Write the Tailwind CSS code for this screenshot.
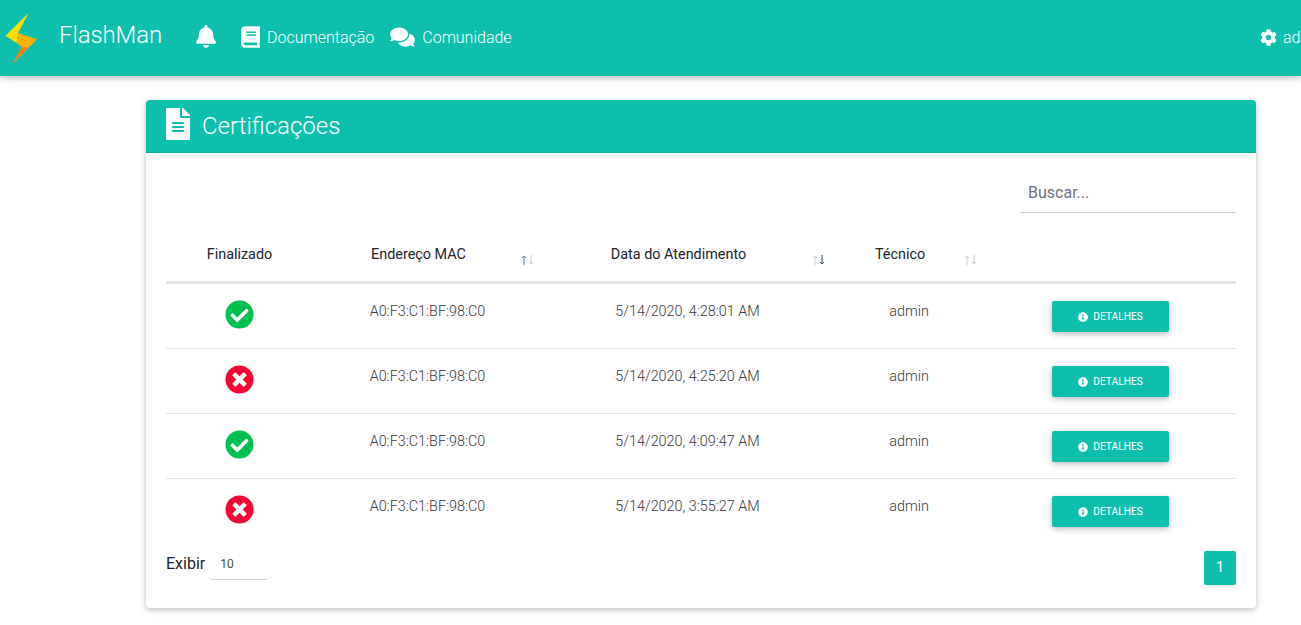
<!DOCTYPE html>
<html lang="pt">
<head>
    <meta charset="UTF-8">
    <meta name="viewport" content="width=device-width, initial-scale=1.0">
    <title>FlashMan - Certificações</title>
    <script src="https://cdn.jsdelivr.net/npm/@tailwindcss/browser@4"></script>
</head>
<body class="bg-white font-['Roboto',sans-serif] text-[#212529] h-[625px] overflow-hidden">
    <!-- Navigation -->
    <nav class="h-[76px] bg-[#0ebfad] text-white flex items-center shadow-[0_2px_5px_0_rgba(0,0,0,0.16),0_2px_10px_0_rgba(0,0,0,0.12)] relative">
        <svg class="w-[37px] h-[50px] ml-[3px] mb-[1px] shrink-0" viewBox="3 13 37 50">
            <polygon points="28.5,13 5.5,35.7 16.7,43 18,33" fill="#ffdd00"/>
            <polygon points="18,33 37,39.3 13.5,63 21.7,46.7 16.7,43" fill="#ffb000"/>
            <polygon points="21.7,46.7 28,47.5 13.5,63" fill="#ff7a0a"/>
        </svg>
        <span class="ml-[19px] text-[24px] font-light leading-none mb-[6px] tracking-[-0.005em]">FlashMan</span>
        <svg class="w-[20px] h-[23px] ml-[34px] mb-[4px] shrink-0" viewBox="0 0 448 512" fill="currentColor"><path d="M224 512c35.32 0 63.97-28.65 63.97-64H160.03c0 35.35 28.65 64 63.97 64zm215.39-149.71c-19.32-20.76-55.47-51.99-55.47-154.29 0-77.7-54.48-139.9-127.94-155.16V32c0-17.67-14.32-32-31.98-32s-31.98 14.33-31.98 32v20.84C118.56 68.1 64.08 130.3 64.08 208c0 102.3-36.15 133.53-55.47 154.29-6 6.45-8.66 14.16-8.61 21.71.11 16.4 12.98 32 32.1 32h383.8c19.12 0 32-15.6 32.1-32 .05-7.55-2.61-15.27-8.61-21.71z"/></svg>
        <svg class="w-[19px] h-[22px] ml-[25px] mb-[2px] shrink-0" viewBox="0 0 448 512" fill="currentColor"><path d="M448 360V24c0-13.3-10.7-24-24-24H96C43 0 0 43 0 96v320c0 53 43 96 96 96h328c13.3 0 24-10.7 24-24v-16c0-7.5-3.5-14.3-8.9-18.7-4.2-15.4-4.2-59.3 0-74.7 5.4-4.3 8.9-11.1 8.9-18.6zM128 134c0-3.3 2.7-6 6-6h212c3.3 0 6 2.7 6 6v20c0 3.3-2.7 6-6 6H134c-3.3 0-6-2.7-6-6v-20zm0 64c0-3.3 2.7-6 6-6h212c3.3 0 6 2.7 6 6v20c0 3.3-2.7 6-6 6H134c-3.3 0-6-2.7-6-6v-20zm253.4 250H96c-17.7 0-32-14.3-32-32 0-17.6 14.4-32 32-32h285.4c-1.9 17.1-1.9 46.9 0 64z"/></svg>
        <span class="ml-[7px] text-[16px] font-light">Documentação</span>
        <svg class="w-[25px] h-[22px] ml-[16px] mb-[2px] shrink-0" viewBox="0 0 576 512" fill="currentColor"><path d="M416 192c0-88.4-93.1-160-208-160S0 103.6 0 192c0 34.3 14.1 65.9 38 92-13.4 30.2-35.5 54.2-35.8 54.5-2.2 2.3-2.8 5.7-1.5 8.7S4.8 352 8 352c36.6 0 66.9-12.3 88.7-25 32.2 15.7 70.3 25 111.3 25 114.9 0 208-71.6 208-160zm122 220c23.9-26 38-57.7 38-92 0-66.9-53.5-124.2-129.3-148.1.9 6.6 1.3 13.3 1.3 20.1 0 105.9-107.7 192-240 192-10.8 0-21.3-.8-31.7-1.9C207.8 439.6 281.8 480 368 480c41 0 79.1-9.2 111.3-25 21.8 12.7 52.1 25 88.7 25 3.2 0 6.1-1.9 7.3-4.8 1.3-2.9.7-6.3-1.5-8.7-.3-.3-22.4-24.2-35.8-54.5z"/></svg>
        <span class="ml-[7px] text-[16px] font-light">Comunidade</span>
        <div class="ml-auto w-[41px] overflow-hidden flex items-center whitespace-nowrap shrink-0">
            <svg class="w-[17px] h-[17px] mb-[2px] shrink-0" viewBox="0 0 512 512" fill="currentColor"><path d="M487.4 315.7l-42.6-24.6c4.3-23.2 4.3-47 0-70.2l42.6-24.6c4.9-2.8 7.1-8.6 5.5-14-11.1-35.6-30-67.8-54.7-94.6-3.8-4.1-10-5.1-14.8-2.3L380.8 110c-17.9-15.4-38.5-27.3-60.8-35.1V25.8c0-5.6-3.9-10.5-9.4-11.7-36.7-8.2-74.3-7.8-109.2 0-5.5 1.2-9.4 6.1-9.4 11.7V75c-22.2 7.9-42.8 19.8-60.8 35.1L88.7 85.5c-4.9-2.8-11-1.9-14.8 2.3-24.7 26.7-43.6 58.9-54.7 94.6-1.7 5.4.6 11.2 5.5 14L67.3 221c-4.3 23.2-4.3 47 0 70.2l-42.6 24.6c-4.9 2.8-7.1 8.6-5.5 14 11.1 35.6 30 67.8 54.7 94.6 3.8 4.1 10 5.1 14.8 2.3l42.6-24.6c17.9 15.4 38.5 27.3 60.8 35.1v49.2c0 5.6 3.9 10.5 9.4 11.7 36.7 8.2 74.3 7.8 109.2 0 5.5-1.2 9.4-6.1 9.4-11.7v-49.2c22.2-7.9 42.8-19.8 60.8-35.1l42.6 24.6c4.9 2.8 11 1.9 14.8-2.3 24.7-26.7 43.6-58.9 54.7-94.6 1.5-5.5-.7-11.3-5.6-14.1zM256 336c-44.1 0-80-35.9-80-80s35.9-80 80-80 80 35.9 80 80-35.9 80-80 80z"/></svg>
            <span class="ml-[6px] text-[16px] font-light">admin</span>
        </div>
    </nav>

    <!-- Card -->
    <section class="mt-[24px] ml-[146px] w-[1110px] h-[508px] bg-white rounded-[4px] overflow-hidden shadow-[0_2px_5px_0_rgba(0,0,0,0.16),0_2px_10px_0_rgba(0,0,0,0.12)]">
        <div class="h-[53px] bg-[#0ebfad] border-b border-[#0da899] text-white flex items-center pl-[20px]">
            <svg class="w-[24px] h-[32px] mb-[5px] shrink-0" viewBox="0 0 384 512" fill="currentColor"><path d="M224 136V0H24C10.7 0 0 10.7 0 24v464c0 13.3 10.7 24 24 24h336c13.3 0 24-10.7 24-24V160H248c-13.2 0-24-10.8-24-24zm64 236c0 6.6-5.4 12-12 12H108c-6.6 0-12-5.4-12-12v-8c0-6.6 5.4-12 12-12h168c6.6 0 12 5.4 12 12v8zm0-64c0 6.6-5.4 12-12 12H108c-6.6 0-12-5.4-12-12v-8c0-6.6 5.4-12 12-12h168c6.6 0 12 5.4 12 12v8zm0-72v8c0 6.6-5.4 12-12 12H108c-6.6 0-12-5.4-12-12v-8c0-6.6 5.4-12 12-12h168c6.6 0 12 5.4 12 12zm96-114.1v6.1H256V0h6.1c6.4 0 12.5 2.5 17 7l97.9 98c4.5 4.5 7 10.6 7 16.9z"/></svg>
            <h1 class="ml-[12px] text-[24px] font-light leading-none">Certificações</h1>
        </div>

        <div class="px-[20px]">
            <!-- Search -->
            <div class="flex justify-end pt-[20px]">
                <input type="text" placeholder="Buscar..." class="w-[216px] h-[40px] px-[8px] border-b border-[#ced4da] text-[16px] font-normal outline-none placeholder:text-[#6c757d] placeholder:opacity-100">
            </div>

            <!-- Table -->
            <table class="w-[1070px] table-fixed mt-[19px] border-collapse text-[14.4px]">
                <colgroup>
                    <col class="w-[147px]"><col class="w-[229px]"><col class="w-[290px]"><col class="w-[154px]"><col class="w-[250px]">
                </colgroup>
                <thead>
                    <tr class="h-[50px] border-b-[3px] border-[#dee2e6]">
                        <th class="font-normal text-center align-top pt-[12px]">Finalizado</th>
                        <th class="font-normal text-center align-top pt-[12px] pr-[18px] relative">Endereço MAC
                            <svg class="absolute right-[8px] top-[23px] w-[13px] h-[10px]" viewBox="0 0 13 10" fill="none" stroke-width="1"><path stroke="#5a7fa8" d="M3 10V1M1 3l2-2 2 2"/><path stroke="#c4ccd4" d="M10 0v9M8 7l2 2 2-2"/></svg>
                        </th>
                        <th class="font-normal text-center align-top pt-[12px] pr-[17px] relative">Data do Atendimento
                            <svg class="absolute right-[7px] top-[23px] w-[13px] h-[10px]" viewBox="0 0 13 10" fill="none" stroke-width="1"><path stroke="#c4ccd4" d="M3 10V1M1 3l2-2 2 2"/><path stroke="#2f4f73" d="M10 0v9M8 7l2 2 2-2"/></svg>
                        </th>
                        <th class="font-normal text-center align-top pt-[12px] pr-[18px] relative">Técnico
                            <svg class="absolute right-[9px] top-[23px] w-[13px] h-[10px]" viewBox="0 0 13 10" fill="none" stroke-width="1"><path stroke="#c4ccd4" d="M3 10V1M1 3l2-2 2 2"/><path stroke="#c4ccd4" d="M10 0v9M8 7l2 2 2-2"/></svg>
                        </th>
                        <th></th>
                    </tr>
                </thead>
                <tbody class="font-light text-[#3a3a3a]">
                    <tr class="h-[66px] border-b border-[#dee2e6]">
                        <td class="align-top pt-[16px]"><svg class="w-[29px] h-[29px] mx-auto" viewBox="0 0 512 512" fill="#00c04f"><path d="M504 256c0 136.967-111.033 248-248 248S8 392.967 8 256 119.033 8 256 8s248 111.033 248 248zM227.314 387.314l184-184c6.248-6.248 6.248-16.379 0-22.627l-22.627-22.627c-6.248-6.249-16.379-6.249-22.628 0L216 308.118l-70.059-70.059c-6.248-6.248-16.379-6.248-22.628 0l-22.627 22.627c-6.248 6.248-6.248 16.379 0 22.627l104 104c6.249 6.249 16.379 6.249 22.628.001z"/></svg></td>
                        <td class="align-top pt-[17px] text-center">A0:F3:C1:BF:98:C0</td>
                        <td class="align-top pt-[17px] pl-[1px] text-center">5/14/2020, 4:28:01 AM</td>
                        <td class="align-top pt-[17px] text-center">admin</td>
                        <td class="align-top pt-[17px] pr-[1px] text-center">
                            <button class="w-[117px] h-[31px] pt-[1px] bg-[#0ebfad] text-white rounded-[2px] text-[10.2px] font-normal inline-flex items-center justify-center gap-[5px] shadow-[0_2px_5px_0_rgba(0,0,0,0.16),0_2px_10px_0_rgba(0,0,0,0.12)]"><svg class="w-[10px] h-[10px]" viewBox="0 0 512 512" fill="currentColor"><path d="M256 8C119.043 8 8 119.083 8 256c0 136.997 111.043 248 248 248s248-111.003 248-248C504 119.083 392.957 8 256 8zm0 110c23.196 0 42 18.804 42 42s-18.804 42-42 42-42-18.804-42-42 18.804-42 42-42zm56 254c0 6.627-5.373 12-12 12h-88c-6.627 0-12-5.373-12-12v-24c0-6.627 5.373-12 12-12h12v-64h-12c-6.627 0-12-5.373-12-12v-24c0-6.627 5.373-12 12-12h64c6.627 0 12 5.373 12 12v100h12c6.627 0 12 5.373 12 12v24z"/></svg>DETALHES</button>
                        </td>
                    </tr>
                    <tr class="h-[65px] border-b border-[#dee2e6]">
                        <td class="align-top pt-[16px]"><svg class="w-[29px] h-[29px] mx-auto" viewBox="0 0 512 512" fill="#ff0033"><path d="M256 8C119 8 8 119 8 256s111 248 248 248 248-111 248-248S393 8 256 8zm121.6 313.1c4.7 4.7 4.7 12.3 0 17L338 377.6c-4.7 4.7-12.3 4.7-17 0L256 312l-65.1 65.6c-4.7 4.7-12.3 4.7-17 0L134.4 338c-4.7-4.7-4.7-12.3 0-17l65.6-65-65.6-65.1c-4.7-4.7-4.7-12.3 0-17l39.6-39.6c4.7-4.7 12.3-4.7 17 0l65 65.7 65.1-65.6c4.7-4.7 12.3-4.7 17 0l39.6 39.6c4.7 4.7 4.7 12.3 0 17L312 256l65.6 65.1z"/></svg></td>
                        <td class="align-top pt-[17px] text-center">A0:F3:C1:BF:98:C0</td>
                        <td class="align-top pt-[17px] pl-[1px] text-center">5/14/2020, 4:25:20 AM</td>
                        <td class="align-top pt-[17px] text-center">admin</td>
                        <td class="align-top pt-[17px] pr-[1px] text-center">
                            <button class="w-[117px] h-[31px] pt-[1px] bg-[#0ebfad] text-white rounded-[2px] text-[10.2px] font-normal inline-flex items-center justify-center gap-[5px] shadow-[0_2px_5px_0_rgba(0,0,0,0.16),0_2px_10px_0_rgba(0,0,0,0.12)]"><svg class="w-[10px] h-[10px]" viewBox="0 0 512 512" fill="currentColor"><path d="M256 8C119.043 8 8 119.083 8 256c0 136.997 111.043 248 248 248s248-111.003 248-248C504 119.083 392.957 8 256 8zm0 110c23.196 0 42 18.804 42 42s-18.804 42-42 42-42-18.804-42-42 18.804-42 42-42zm56 254c0 6.627-5.373 12-12 12h-88c-6.627 0-12-5.373-12-12v-24c0-6.627 5.373-12 12-12h12v-64h-12c-6.627 0-12-5.373-12-12v-24c0-6.627 5.373-12 12-12h64c6.627 0 12 5.373 12 12v100h12c6.627 0 12 5.373 12 12v24z"/></svg>DETALHES</button>
                        </td>
                    </tr>
                    <tr class="h-[65px] border-b border-[#dee2e6]">
                        <td class="align-top pt-[16px]"><svg class="w-[29px] h-[29px] mx-auto" viewBox="0 0 512 512" fill="#00c04f"><path d="M504 256c0 136.967-111.033 248-248 248S8 392.967 8 256 119.033 8 256 8s248 111.033 248 248zM227.314 387.314l184-184c6.248-6.248 6.248-16.379 0-22.627l-22.627-22.627c-6.248-6.249-16.379-6.249-22.628 0L216 308.118l-70.059-70.059c-6.248-6.248-16.379-6.248-22.628 0l-22.627 22.627c-6.248 6.248-6.248 16.379 0 22.627l104 104c6.249 6.249 16.379 6.249 22.628.001z"/></svg></td>
                        <td class="align-top pt-[17px] text-center">A0:F3:C1:BF:98:C0</td>
                        <td class="align-top pt-[17px] pl-[1px] text-center">5/14/2020, 4:09:47 AM</td>
                        <td class="align-top pt-[17px] text-center">admin</td>
                        <td class="align-top pt-[17px] pr-[1px] text-center">
                            <button class="w-[117px] h-[31px] pt-[1px] bg-[#0ebfad] text-white rounded-[2px] text-[10.2px] font-normal inline-flex items-center justify-center gap-[5px] shadow-[0_2px_5px_0_rgba(0,0,0,0.16),0_2px_10px_0_rgba(0,0,0,0.12)]"><svg class="w-[10px] h-[10px]" viewBox="0 0 512 512" fill="currentColor"><path d="M256 8C119.043 8 8 119.083 8 256c0 136.997 111.043 248 248 248s248-111.003 248-248C504 119.083 392.957 8 256 8zm0 110c23.196 0 42 18.804 42 42s-18.804 42-42 42-42-18.804-42-42 18.804-42 42-42zm56 254c0 6.627-5.373 12-12 12h-88c-6.627 0-12-5.373-12-12v-24c0-6.627 5.373-12 12-12h12v-64h-12c-6.627 0-12-5.373-12-12v-24c0-6.627 5.373-12 12-12h64c6.627 0 12 5.373 12 12v100h12c6.627 0 12 5.373 12 12v24z"/></svg>DETALHES</button>
                        </td>
                    </tr>
                    <tr class="h-[65px]">
                        <td class="align-top pt-[16px]"><svg class="w-[29px] h-[29px] mx-auto" viewBox="0 0 512 512" fill="#ff0033"><path d="M256 8C119 8 8 119 8 256s111 248 248 248 248-111 248-248S393 8 256 8zm121.6 313.1c4.7 4.7 4.7 12.3 0 17L338 377.6c-4.7 4.7-12.3 4.7-17 0L256 312l-65.1 65.6c-4.7 4.7-12.3 4.7-17 0L134.4 338c-4.7-4.7-4.7-12.3 0-17l65.6-65-65.6-65.1c-4.7-4.7-4.7-12.3 0-17l39.6-39.6c4.7-4.7 12.3-4.7 17 0l65 65.7 65.1-65.6c4.7-4.7 12.3-4.7 17 0l39.6 39.6c4.7 4.7 4.7 12.3 0 17L312 256l65.6 65.1z"/></svg></td>
                        <td class="align-top pt-[17px] text-center">A0:F3:C1:BF:98:C0</td>
                        <td class="align-top pt-[17px] pl-[1px] text-center">5/14/2020, 3:55:27 AM</td>
                        <td class="align-top pt-[17px] text-center">admin</td>
                        <td class="align-top pt-[17px] pr-[1px] text-center">
                            <button class="w-[117px] h-[31px] pt-[1px] bg-[#0ebfad] text-white rounded-[2px] text-[10.2px] font-normal inline-flex items-center justify-center gap-[5px] shadow-[0_2px_5px_0_rgba(0,0,0,0.16),0_2px_10px_0_rgba(0,0,0,0.12)]"><svg class="w-[10px] h-[10px]" viewBox="0 0 512 512" fill="currentColor"><path d="M256 8C119.043 8 8 119.083 8 256c0 136.997 111.043 248 248 248s248-111.003 248-248C504 119.083 392.957 8 256 8zm0 110c23.196 0 42 18.804 42 42s-18.804 42-42 42-42-18.804-42-42 18.804-42 42-42zm56 254c0 6.627-5.373 12-12 12h-88c-6.627 0-12-5.373-12-12v-24c0-6.627 5.373-12 12-12h12v-64h-12c-6.627 0-12-5.373-12-12v-24c0-6.627 5.373-12 12-12h64c6.627 0 12 5.373 12 12v100h12c6.627 0 12 5.373 12 12v24z"/></svg>DETALHES</button>
                        </td>
                    </tr>
                </tbody>
            </table>

            <!-- Footer -->
            <div class="flex justify-between items-start mt-[8px]">
                <div class="flex items-start pt-[1px]">
                    <span class="text-[16px] font-normal leading-[24px]">Exibir</span>
                    <div class="ml-[4px] w-[60px] h-[27px] border-b border-[#ced4da] rounded-b-[4px] pl-[11px] text-[12px] font-normal text-[#495057] leading-[22px] mt-[1px]">10</div>
                </div>
                <div class="w-[32px] h-[34px] bg-[#0ebfad] text-white rounded-[2px] flex items-center justify-center text-[14.4px] shadow-[0_2px_5px_0_rgba(0,0,0,0.1)]">1</div>
            </div>
        </div>
    </section>
</body>
</html>
